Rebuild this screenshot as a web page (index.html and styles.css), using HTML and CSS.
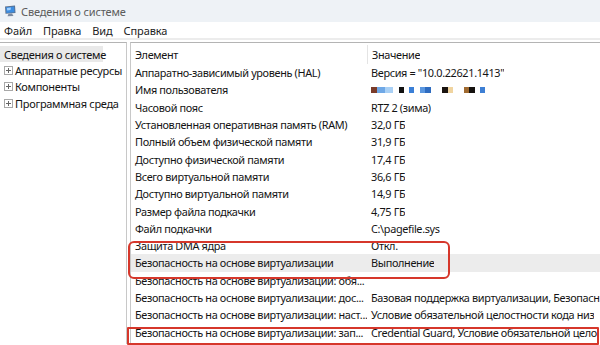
FILE: index.html
```html
<!DOCTYPE html>
<html lang="ru">
<head>
    <meta charset="UTF-8">
    <meta name="viewport" content="width=device-width, initial-scale=1.0">
    <link rel="stylesheet" href="styles.css">
</head>
<body>
    <div class="ventana">
        <div class="barra-titulo">
            <svg class="icono-app" width="13" height="12" viewBox="0 0 13 12">
                <path d="M1 1.5 L11 0.5 L11.5 8 L1.5 8.8 Z" fill="#5a6f8c"/>
                <path d="M2 2.3 L10.2 1.5 L10.6 7.2 L2.4 7.9 Z" fill="#3d8de0"/>
                <path d="M3 3 L7 2.6 L6.5 5 L3.2 5.4 Z" fill="#9fd0ff"/>
                <path d="M4.5 8.8 L8 8.5 L9.5 11 L3.5 11.3 Z" fill="#7b8aa0"/>
            </svg>
            <span class="titulo">Сведения о системе</span>
        </div>
        <div class="barra-menu">
            <span>Файл</span>
            <span>Правка</span>
            <span>Вид</span>
            <span>Справка</span>
        </div>
        <div class="contenido">
            <div class="arbol">
                <div class="nodo nodo-sel">Сведения о системе</div>
                <div class="nodo"><span class="mas"></span>Аппаратные ресурсы</div>
                <div class="nodo"><span class="mas"></span>Компоненты</div>
                <div class="nodo"><span class="mas"></span>Программная среда</div>
            </div>
            <div class="lista">
                <div class="fila cabecera">
                    <div class="col-a">Элемент</div>
                    <div class="col-b">Значение</div>
                </div>
                <div class="fila"><div class="col-a">Аппаратно-зависимый уровень (HAL)</div><div class="col-b">Версия = "10.0.22621.1413"</div></div>
                <div class="fila"><div class="col-a">Имя пользователя</div><div class="col-b">
                    <svg class="pixelado" width="116" height="6" viewBox="0 0 116 6">
                        <rect x="0" y="0" width="6" height="6" fill="#7a3b2a"/>
                        <rect x="6" y="0" width="8" height="6" fill="#6fa8e6"/>
                        <rect x="14" y="0" width="8" height="6" fill="#a9d0f5"/>
                        <rect x="28" y="0" width="5" height="6" fill="#111"/>
                        <rect x="38" y="0" width="5" height="6" fill="#3b7fd6"/>
                        <rect x="49" y="0" width="5" height="6" fill="#5a97e0"/>
                        <rect x="54" y="0" width="6" height="6" fill="#2f6cc0"/>
                        <rect x="71" y="0" width="6" height="6" fill="#1a1410"/>
                        <rect x="77" y="0" width="5" height="6" fill="#f0d4a0"/>
                        <rect x="93" y="0" width="5" height="6" fill="#a06a30"/>
                        <rect x="98" y="0" width="6" height="6" fill="#15120f"/>
                        <rect x="109" y="0" width="5" height="6" fill="#3d7fd4"/>
                    </svg>
                </div></div>
                <div class="fila"><div class="col-a">Часовой пояс</div><div class="col-b">RTZ 2 (зима)</div></div>
                <div class="fila"><div class="col-a">Установленная оперативная память (RAM)</div><div class="col-b">32,0 ГБ</div></div>
                <div class="fila"><div class="col-a">Полный объем физической памяти</div><div class="col-b">31,9 ГБ</div></div>
                <div class="fila"><div class="col-a">Доступно физической памяти</div><div class="col-b">17,4 ГБ</div></div>
                <div class="fila"><div class="col-a">Всего виртуальной памяти</div><div class="col-b">36,6 ГБ</div></div>
                <div class="fila"><div class="col-a">Доступно виртуальной памяти</div><div class="col-b">14,9 ГБ</div></div>
                <div class="fila"><div class="col-a">Размер файла подкачки</div><div class="col-b">4,75 ГБ</div></div>
                <div class="fila"><div class="col-a">Файл подкачки</div><div class="col-b">C:\pagefile.sys</div></div>
                <div class="fila"><div class="col-a">Защита DMA ядра</div><div class="col-b">Откл.</div></div>
                <div class="fila fila-sel"><div class="col-a">Безопасность на основе виртуализации</div><div class="col-b">Выполнение</div></div>
                <div class="fila"><div class="col-a">Безопасность на основе виртуализации: обя...</div><div class="col-b"></div></div>
                <div class="fila"><div class="col-a">Безопасность на основе виртуализации: дос...</div><div class="col-b">Базовая поддержка виртуализации, Безопасн</div></div>
                <div class="fila"><div class="col-a">Безопасность на основе виртуализации: наст...</div><div class="col-b">Условие обязательной целостности кода низ</div></div>
                <div class="fila"><div class="col-a">Безопасность на основе виртуализации: зап...</div><div class="col-b">Credential Guard, Условие обязательной цело</div></div>
            </div>
        </div>
        <!-- marcas rojas de la captura -->
        <div class="marca marca-a"></div>
        <div class="marca marca-b"></div>
    </div>
</body>
</html>
```

FILE: styles.css
```css
body {
    margin: 0;
    background: #fff;
    font-family: "Noto Sans", "Open Sans", sans-serif;
    color: #141414;
    overflow: hidden;
}

.ventana {
    position: relative;
    width: 600px;
    height: 345px;
    overflow: hidden;
}

.barra-titulo {
    display: flex;
    align-items: center;
    height: 22px;
    padding-left: 4px;
    background: #eef2f6;
}
.icono-app {
    margin-right: 4px;
}
.titulo {
    font-size: 11px;
    letter-spacing: -0.15px;
    color: #5c5c5c;
}

.barra-menu {
    display: flex;
    align-items: center;
    gap: 11px;
    height: 16px;
    padding-left: 4px;
    font-size: 11px;
    letter-spacing: -0.1px;
    color: #222;
    border-bottom: 2px solid #ececec;
    margin-bottom: 2px;
}

.contenido {
    display: flex;
    gap: 2px;
    height: 302px;
}

.arbol {
    width: 127px;
    flex-shrink: 0;
    box-sizing: border-box;
    border-top: 1px solid #b4b4b4;
    border-right: 1px solid #c8c8c8;
    padding-top: 3px;
    font-size: 11px;
    letter-spacing: -0.3px;
    overflow: hidden;
}
.nodo {
    display: flex;
    align-items: center;
    height: 16.3px;
    padding-left: 4px;
    white-space: nowrap;
}
.nodo-sel {
    width: 99px;
    background: #e9e9e9;
}
.mas {
    position: relative;
    width: 7px;
    height: 7px;
    border: 1px solid #a8a8a8;
    margin-right: 2px;
    flex-shrink: 0;
}
.mas::before,
.mas::after {
    content: "";
    position: absolute;
    background: #666;
}
.mas::before {
    left: 1px;
    top: 3px;
    width: 5px;
    height: 1px;
}
.mas::after {
    left: 3px;
    top: 1px;
    width: 1px;
    height: 5px;
}

.lista {
    flex: 1;
    min-width: 0;
    margin-left: 1px;
    border-top: 1px solid #b4b4b4;
    border-left: 1px solid #c8c8c8;
    font-size: 10.9px;
    letter-spacing: -0.35px;
}
.fila {
    display: flex;
    align-items: center;
    height: 17.3px;
    white-space: nowrap;
}
.cabecera {
    height: 21px;
    padding-top: 2px;
    box-sizing: border-box;
}
.cabecera .col-b {
    border-left: 1px solid #e4e4e4;
    height: 100%;
    display: flex;
    align-items: center;
    padding-left: 4px;
}
.fila-sel {
    background: #ececec;
}
.col-a {
    width: 232px;
    flex-shrink: 0;
    padding-left: 4px;
    overflow: hidden;
}
.col-b {
    padding-left: 4px;
    overflow: hidden;
}
.pixelado {
    display: block;
}

.marca {
    position: absolute;
    border: 2.5px solid #d6372b;
    box-sizing: border-box;
}
.marca-a {
    left: 128px;
    top: 241px;
    width: 322px;
    height: 38px;
    border-radius: 6px;
}
.marca-b {
    left: 127px;
    top: 327px;
    width: 472px;
    height: 18px;
    border-radius: 1px;
}
```
